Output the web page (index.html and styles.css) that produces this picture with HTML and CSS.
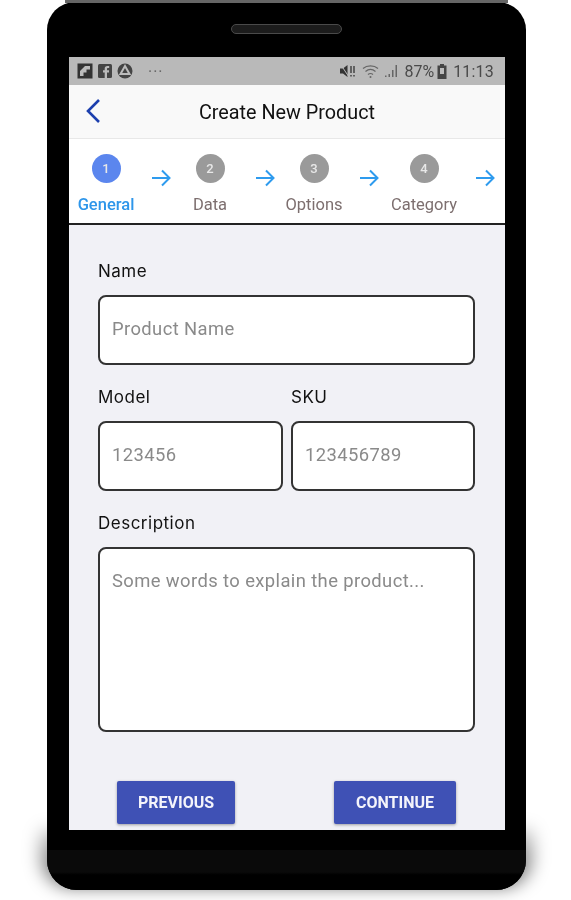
FILE: index.html
```html
<!DOCTYPE html>
<html lang="en">
<head>
    <meta charset="UTF-8">
    <meta name="viewport" content="width=device-width, initial-scale=1.0">
    <title>Create New Product</title>
    <link rel="stylesheet" href="styles.css">
</head>
<body>
    <div class="phone">
        <div class="phone-chin"></div>
        <div class="speaker"></div>

        <div class="screen">
            <!-- Status bar -->
            <div class="status-bar">
                <div class="status-left">
                    <svg class="notif" width="16" height="16" viewBox="0 0 16 16">
                        <rect x="0.5" y="0.5" width="15" height="15" fill="#333"/>
                        <path d="M3 13V8L8 3H13V6.500H9.500V9.500H6.500V13Z" fill="#bbb"/>
                    </svg>
                    <svg class="notif" width="14" height="14" viewBox="0 0 14 14">
                        <rect width="14" height="14" rx="1.5" fill="#444"/>
                        <path d="M9 14V8.5h2V6.3H9V5c0-.7.3-1 1-1h1.2V2H9.5C7.6 2 6.7 3 6.7 4.8v1.5H5v2.2h1.7V14Z" fill="#bbb"/>
                    </svg>
                    <svg class="notif" width="16" height="16" viewBox="0 0 16 16">
                        <circle cx="8" cy="8" r="7.5" fill="#444"/>
                        <path d="M8 3 12.5 11H3.500Z" fill="none" stroke="#bbb" stroke-width="2"/>
                    </svg>
                    <span class="more">···</span>
                </div>
                <div class="status-right">
                    <svg width="16" height="14" viewBox="0 0 16 14">
                        <path d="M0 4.500h3L7.500 1v12L3 9.500H0Z" fill="#333"/>
                        <path d="M1 1 9 13" stroke="#bbb" stroke-width="1"/>
                        <path d="M11 2v7M14 2v7" stroke="#444" stroke-width="1.500"/>
                        <path d="M11 11v1.500M14 11v1.500" stroke="#444" stroke-width="1.500"/>
                    </svg>
                    <svg class="wifi" width="19" height="14" viewBox="0 0 19 14">
                        <path d="M1 4.500C5 1 12 1 16 4.500M3.500 7.500C6.500 5 10.500 5 13.500 7.500M6 10.500C7.500 9.300 9.500 9.300 11 10.500" fill="none" stroke="#666" stroke-width="1.200"/>
                        <circle cx="8.500" cy="13" r="1" fill="#666"/>
                    </svg>
                    <svg width="14" height="14" viewBox="0 0 14 14">
                        <path d="M1 13h1.500v-1.500H1ZM4.500 13H6v-3H4.500ZM8 13h1.500V6H8ZM11.500 13H13V1h-1.500Z" fill="#666"/>
                    </svg>
                    <span class="percent">87%</span>
                    <svg width="10" height="15" viewBox="0 0 10 15">
                        <path d="M3 0h4v1.500h2.500V15H.5V1.500H3Z" fill="#444"/>
                        <rect x="3" y="4" width="4" height="6" fill="#bbb"/>
                    </svg>
                    <span class="clock">11:13</span>
                </div>
            </div>

            <!-- App bar -->
            <div class="app-bar">
                <svg class="back" width="16" height="26" viewBox="0 0 16 26">
                    <path d="M14 2 3 13 14 24" fill="none" stroke="#1c3fae" stroke-width="2.600"/>
                </svg>
                <h1>Create New Product</h1>
            </div>

            <!-- Stepper -->
            <div class="stepper">
                <div class="step active">
                    <span class="step-num">1</span>
                    <span class="step-label">General</span>
                </div>
                <svg class="arrow" width="19" height="18" viewBox="0 0 19 18"><path d="M0 9H17M10 1.500 17.500 9 10 16.500" fill="none" stroke="#2e9bee" stroke-width="2"/></svg>
                <div class="step">
                    <span class="step-num">2</span>
                    <span class="step-label">Data</span>
                </div>
                <svg class="arrow" width="19" height="18" viewBox="0 0 19 18"><path d="M0 9H17M10 1.500 17.500 9 10 16.500" fill="none" stroke="#2e9bee" stroke-width="2"/></svg>
                <div class="step">
                    <span class="step-num">3</span>
                    <span class="step-label">Options</span>
                </div>
                <svg class="arrow" width="19" height="18" viewBox="0 0 19 18"><path d="M0 9H17M10 1.500 17.500 9 10 16.500" fill="none" stroke="#2e9bee" stroke-width="2"/></svg>
                <div class="step step-last">
                    <span class="step-num">4</span>
                    <span class="step-label">Category</span>
                </div>
                <svg class="arrow" width="19" height="18" viewBox="0 0 19 18"><path d="M0 9H17M10 1.500 17.500 9 10 16.500" fill="none" stroke="#2e9bee" stroke-width="2"/></svg>
            </div>

            <!-- Product form -->
            <form class="product-form">
                <label for="name">Name</label>
                <input type="text" id="name" placeholder="Product Name">

                <div class="form-row">
                    <div class="form-col">
                        <label for="model">Model</label>
                        <input type="text" id="model" placeholder="123456">
                    </div>
                    <div class="form-col">
                        <label for="sku">SKU</label>
                        <input type="text" id="sku" placeholder="123456789">
                    </div>
                </div>

                <label for="description">Description</label>
                <textarea id="description" placeholder="Some words to explain the product..."></textarea>

                <div class="form-actions">
                    <button type="button" class="btn-prev">PREVIOUS</button>
                    <button type="button" class="btn-next">CONTINUE</button>
                </div>
            </form>
        </div>
    </div>
</body>
</html>
```

FILE: styles.css
```css
* {
    box-sizing: border-box;
}

body {
    margin: 0;
    height: 900px;
    overflow: hidden;
    background-color: #fff;
    font-family: Roboto, sans-serif;
}

.phone {
    position: relative;
    z-index: 0;
    width: 479px;
    height: 888px;
    margin: 2px 0 0 47px;
    padding: 55px 21px 0 22px;
    background-color: #000;
    border-radius: 28px 28px 30px 30px;
}

/* grey edge along the top of the phone */
.phone::after {
    content: "";
    position: absolute;
    top: -2px;
    left: 18px;
    right: 18px;
    height: 3px;
    background-color: #666;
    z-index: -1;
}

/* soft shadow under the bottom of the phone */
.phone::before {
    content: "";
    position: absolute;
    left: -6px;
    right: -6px;
    bottom: 4px;
    height: 56px;
    border-radius: 0 0 30px 30px;
    background: linear-gradient(rgba(0, 0, 0, 0.2), rgba(0, 0, 0, 0.7));
    filter: blur(9px);
    z-index: -1;
}

.phone-chin {
    position: absolute;
    left: 0;
    right: 0;
    bottom: 0;
    height: 40px;
    border-radius: 0 0 30px 30px;
    background: linear-gradient(#0a0a0a 55%, #000 62%);
}

.speaker {
    position: absolute;
    top: 22px;
    left: 184px;
    width: 111px;
    height: 10px;
    background-color: #1c1c1c;
    border: 1px solid #4a4a4a;
    border-radius: 5px;
}

.screen {
    position: relative;
    width: 436px;
    height: 773px;
    background-color: #f1f1f6;
    filter: blur(0.5px);
}

.status-bar {
    display: flex;
    justify-content: space-between;
    align-items: center;
    height: 28px;
    padding: 0 11px 0 8px;
    background-color: #b9b9b9;
    color: #4a4a4a;
}

.status-left,
.status-right {
    display: flex;
    align-items: center;
}

.status-left {
    gap: 5px;
}

.status-right {
    gap: 3px;
    font-size: 15px;
}

.more {
    margin-left: 10px;
    font-size: 16px;
    letter-spacing: 1px;
    color: #666;
}

.wifi {
    margin-left: 3px;
}

.percent {
    margin-left: 3px;
    font-size: 16px;
}

.clock {
    margin-left: 3px;
    font-size: 16px;
    letter-spacing: 0.2px;
}

.app-bar {
    position: relative;
    height: 54px;
    background-color: #f9f9f9;
    border-bottom: 1px solid #e8e8e8;
}

.app-bar h1 {
    margin: 0;
    font-size: 19.8px;
    font-weight: 400;
    line-height: 55px;
    text-align: center;
    color: #111;
}

.back {
    position: absolute;
    left: 16px;
    top: 13px;
}

.stepper {
    display: flex;
    height: 86px;
    padding: 15px 0 0 7px;
    background-color: #fff;
    border-bottom: 2px solid #222;
}

.step {
    display: flex;
    flex-direction: column;
    align-items: center;
    gap: 12px;
    width: 60px;
    flex: none;
}

.step-last {
    width: 72px;
}

.step-num {
    width: 29px;
    height: 29px;
    border-radius: 50%;
    background-color: #9a9a9a;
    color: #e8e8e8;
    font-size: 13px;
    font-weight: 500;
    line-height: 29px;
    text-align: center;
}

.step-label {
    font-size: 16.5px;
    white-space: nowrap;
    color: #7d6f6f;
}

.step.active .step-num {
    background-color: #5b86ee;
}

.step.active .step-label {
    color: #2e96ea;
    font-weight: 500;
}

.arrow {
    flex: none;
    margin: 15px 9px 0 16px;
}

.product-form {
    padding: 35px 30px 0 29px;
}

.product-form label {
    display: block;
    height: 35px;
    font-family: Inter, sans-serif;
    font-size: 17px;
    letter-spacing: 0.5px;
    line-height: 22px;
    color: #111;
}

.product-form input,
.product-form textarea {
    display: block;
    width: 100%;
    height: 70px;
    padding: 0 12px 3px;
    border: 2px solid #333;
    border-radius: 8px;
    background-color: #fff;
    font-family: Roboto, sans-serif;
    font-size: 18.4px;
    letter-spacing: 0.4px;
    outline: none;
    resize: none;
}

.product-form textarea {
    height: 185px;
    padding-top: 21px;
}

.product-form ::placeholder {
    color: #8a8a8a;
    opacity: 1;
}

.form-row {
    display: grid;
    grid-template-columns: 185px 184px;
    gap: 8px;
    margin: 21px 0;
}

.form-actions {
    display: flex;
    margin-top: 49px;
    padding-left: 19px;
}

.form-actions button {
    height: 43px;
    border: none;
    border-radius: 2px;
    background-color: #3f51b5;
    color: #f4f4fb;
    font-family: Roboto, sans-serif;
    font-size: 16px;
    font-weight: 700;
    box-shadow: 0 1px 3px rgba(0, 0, 0, 0.35);
}

.btn-prev {
    width: 118px;
}

.btn-next {
    width: 122px;
    margin-left: 99px;
}
```
